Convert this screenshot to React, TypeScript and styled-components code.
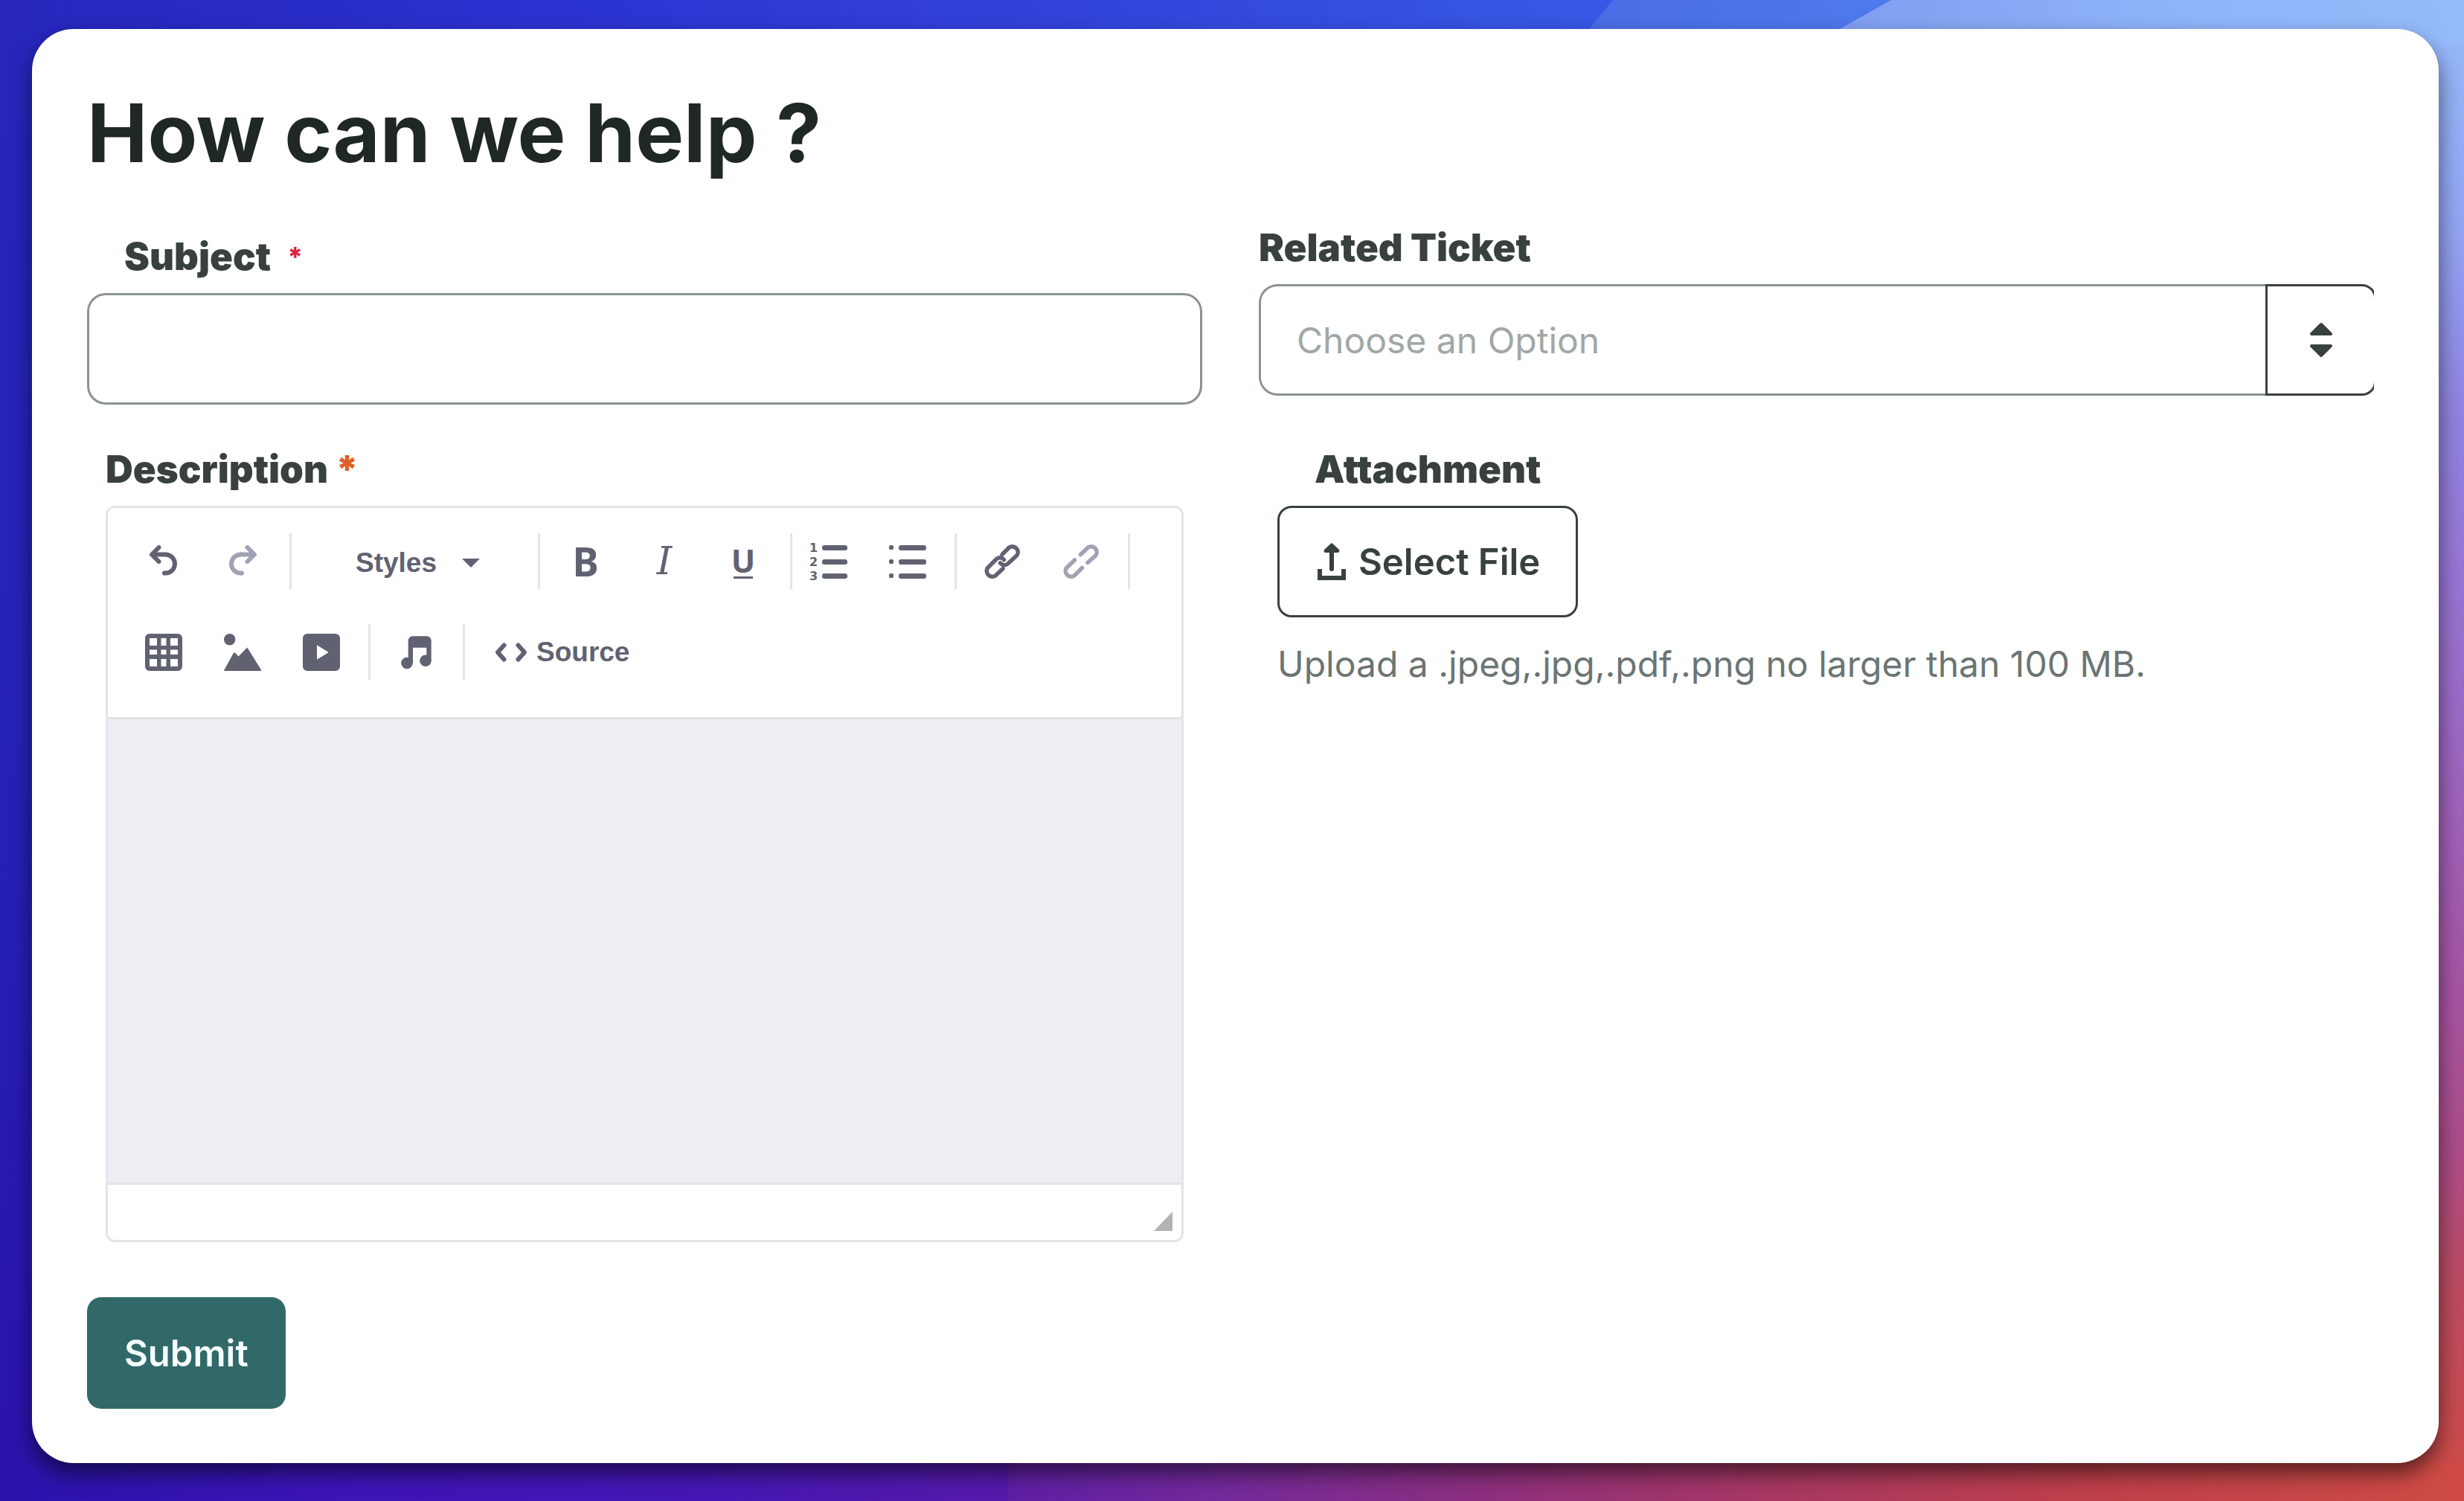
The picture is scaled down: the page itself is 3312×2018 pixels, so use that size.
import React from "react";
import styled, { createGlobalStyle, css } from "styled-components";

const ink = "#39413f";
const iconInk = "#616271";
const sans = `Inter, "Open Sans", sans-serif`;
const toolSans = `"Liberation Sans", Arial, sans-serif`;

const GlobalStyle = createGlobalStyle`
  *, *::before, *::after { box-sizing: border-box; }
  body { margin: 0; font-family: ${sans}; color: ${ink}; }
  button, input, select, textarea { font: inherit; color: inherit; margin: 0; }
`;

const Page = styled.div`
  position: relative;
  isolation: isolate;
  min-height: 100vh;
  padding: 39px 34px 51px 43px;
`;

const Backdrop = styled.svg`
  position: absolute;
  inset: 0;
  z-index: -1;
  width: 100%;
  height: 100%;
`;

const Card = styled.main`
  min-height: calc(100vh - 90px);
  padding: 69px 87px 70px 74px;
  background: #fff;
  border-radius: 56px;
  box-shadow: 0 14px 28px rgba(0, 0, 0, 0.55);
`;

const Title = styled.h1`
  margin: 0 0 48px;
  font-size: 109px;
  line-height: 140px;
  font-weight: 700;
  color: #1f2827;
`;

const Fields = styled.div`
  display: grid;
  grid-template-columns: minmax(0, 1fr) minmax(0, 1fr);
  gap: 50px 76px;
  align-items: start;
`;

const Field = styled.div<{ $lowered?: boolean; $inset?: boolean }>`
  display: flex;
  flex-direction: column;
  gap: 12px;
  padding: ${(p) => (p.$lowered ? "12px" : "0")} ${(p) => (p.$inset ? "25px" : "0")} 0;
`;

const Label = styled.label<{ $indent?: boolean }>`
  display: flex;
  padding-left: ${(p) => (p.$indent ? "50px" : "0")};
  font-size: 51px;
  line-height: 74px;
  font-weight: 900;
`;

const Required = styled.span<{ $tone: "light" | "strong" }>`
  ${(p) =>
    p.$tone === "light"
      ? css`
          margin-left: 22px;
          font-size: 36px;
          font-weight: 800;
          color: #d9253f;
        `
      : css`
          margin-left: 10px;
          color: #dd6127;
        `}
`;

const TextInput = styled.input`
  width: 100%;
  height: 150px;
  padding: 0 48px;
  border: 3px solid #8a9491;
  border-radius: 25px;
  background: #fff;
  font-size: 48px;
`;

const Combo = styled.div`
  display: flex;
  height: 150px;
  overflow: hidden;
`;

const Select = styled.select`
  flex: 1;
  min-width: 0;
  padding: 0 48px;
  appearance: none;
  border: 3px solid #8a9491;
  border-right: 0;
  border-radius: 25px 0 0 25px;
  background: #fff;
  font-size: 48px;
  color: #a1a7a5;
`;

const ComboButton = styled.button`
  display: flex;
  align-items: center;
  justify-content: center;
  width: 149px;
  margin-right: -3px;
  padding: 0;
  border: 3px solid ${ink};
  border-radius: 0 19px 19px 0;
  background: #fff;
`;

const Editor = styled.div`
  border: 3px solid #e4e4ea;
  border-radius: 12px;
  overflow: hidden;
`;

const Toolbar = styled.div`
  display: flex;
  flex-wrap: wrap;
  row-gap: 47px;
  padding: 34px 14px 50px;
  border-bottom: 3px solid #e4e4e6;
  color: ${iconInk};
  font-family: ${toolSans};
`;

const ToolGroup = styled.div<{ $tight?: boolean; $last?: boolean }>`
  display: flex;
  align-items: center;
  gap: 20px;
  height: 75px;
  padding: 0 20px 0 ${(p) => (p.$tight ? "6px" : "18px")};
  border-right: ${(p) => (p.$last ? "0" : "3px solid #e4e4ea")};
`;

const Tool = styled.button`
  display: flex;
  align-items: center;
  justify-content: center;
  width: 86px;
  height: 75px;
  padding: 0;
  border: 0;
  background: none;

  &:disabled {
    color: #a1a2b5;
  }
`;

const TextTool = styled(Tool)`
  width: auto;
  gap: 12px;
  padding: 0 22px;
  font-size: 37px;
  font-weight: 700;
`;

const StylesTool = styled(TextTool)`
  gap: 34px;
  padding: 4px 58px 0 68px;
`;

const Bold = styled.span`
  font-family: "Noto Sans", sans-serif;
  font-size: 53px;
  line-height: 75px;
  font-weight: 700;
`;

const Italic = styled.span`
  font-family: "DejaVu Serif", serif;
  font-size: 52px;
  line-height: 75px;
  font-style: italic;
`;

const Underline = styled.span`
  padding-bottom: 2px;
  background: linear-gradient(currentColor, currentColor) center bottom / 26px 3px no-repeat;
  font-family: "Noto Sans", sans-serif;
  font-size: 43px;
  line-height: 44px;
  font-weight: 700;
`;

const EditorArea = styled.textarea`
  display: block;
  width: 100%;
  height: 623px;
  padding: 32px;
  border: 0;
  background: #edeef3;
  resize: none;
  font-size: 48px;
`;

const EditorFooter = styled.div`
  display: flex;
  align-items: flex-end;
  justify-content: flex-end;
  height: 77px;
  padding: 12px;
  border-top: 3px solid #e4e4e6;
`;

const FileButton = styled.button`
  display: flex;
  align-items: center;
  align-self: flex-start;
  gap: 17px;
  height: 150px;
  padding: 0 48px 0 51px;
  border: 3px solid ${ink};
  border-radius: 19px;
  background: #fff;
  font-size: 49px;
  font-weight: 600;
`;

const Hint = styled.p`
  margin: 14px 0 0;
  font-size: 48px;
  line-height: 74px;
  color: #6b7573;
`;

const Submit = styled.button`
  height: 150px;
  margin-top: 74px;
  padding: 0 50px;
  border: 0;
  border-radius: 19px;
  background: #316969;
  color: #f6fdfc;
  font-size: 49px;
  font-weight: 600;
`;

function Icon({ children, width = 50 }: { children: React.ReactNode; width?: number }) {
  return (
    <svg
      width={width}
      height="50"
      viewBox={`0 0 ${width} 50`}
      fill="currentColor"
      overflow="visible"
      aria-hidden="true"
    >
      {children}
    </svg>
  );
}

const line = { fill: "none", stroke: "currentColor", strokeWidth: 6, strokeLinecap: "round", strokeLinejoin: "round" } as const;

const UndoShape = () => (
  <>
    <path d="M18.5 6 9 15.5 18.5 25M10 15.5H27.5" {...line} />
    <path d="M27 15.5h.5a12.5 12.5 0 0 1 0 25H25.5" {...line} strokeLinecap="butt" />
    <circle cx="26" cy="40.5" r="3" />
  </>
);

const UndoIcon = () => (
  <Icon>
    <UndoShape />
  </Icon>
);

const RedoIcon = () => (
  <Icon>
    <g transform="translate(50 0) scale(-1 1)">
      <UndoShape />
    </g>
  </Icon>
);

const NumberedIcon = () => (
  <Icon>
    {[6, 25, 44].map((y, i) => (
      <React.Fragment key={y}>
        <text x="-1" y={y + 6} fontFamily="DejaVu Sans" fontWeight="700" fontSize="16">
          {i + 1}
        </text>
        <rect x="16" y={y - 3} width="34" height="7" rx="3" />
      </React.Fragment>
    ))}
  </Icon>
);

const BulletIcon = () => (
  <Icon>
    {[6, 25, 44].map((y) => (
      <React.Fragment key={y}>
        <rect x="0" y={y - 3} width="6" height="6" rx="2" />
        <rect x="13" y={y - 3} width="37" height="7" rx="3" />
      </React.Fragment>
    ))}
  </Icon>
);

const LinkIcon = () => (
  <Icon>
    <path
      d="M25 15.5 34.5 6A7.6 7.6 0 0 1 45 16.5L32.5 28A7 7 0 0 1 22.5 27M27.5 22.5A7 7 0 0 0 17.5 21.5L5.5 33.5A7.6 7.6 0 0 0 16 44L26 34.5"
      {...line}
      strokeWidth={5.5}
    />
  </Icon>
);

const UnlinkIcon = () => (
  <Icon>
    <path
      d="M24.5 15.5 34.5 6A7.6 7.6 0 0 1 45 16.5L34 26.5M16.5 23 5.5 33.5A7.6 7.6 0 0 0 16 44L26.5 33.5"
      {...line}
      strokeWidth={5.5}
    />
  </Icon>
);

const TableIcon = () => (
  <Icon>
    <path
      fillRule="evenodd"
      d="M6 0H44a6 6 0 0 1 6 6V44a6 6 0 0 1-6 6H6a6 6 0 0 1-6-6V6a6 6 0 0 1 6-6Z
        M6 6V16H16V6ZM21.5 6V16H28.5V6ZM34 6V16H44V6Z
        M6 21.5V28H16V21.5ZM21.5 21.5V28H28.5V21.5ZM34 21.5V28H44V21.5Z
        M6 34V44H16V34ZM21.5 34V44H28.5V34ZM34 34V44H44V34Z"
    />
  </Icon>
);

const ImageIcon = () => (
  <Icon>
    <circle cx="7.7" cy="7.7" r="7.7" />
    <path d="M0 49.5 12.8 26q1.2-1.5 2.6 0l4.1 4.5 11.8-12L50 48.5V50H0Z" />
  </Icon>
);

const VideoIcon = () => (
  <Icon>
    <path
      fillRule="evenodd"
      d="M6 0H44a6 6 0 0 1 6 6V44a6 6 0 0 1-6 6H6a6 6 0 0 1-6-6V6a6 6 0 0 1 6-6ZM19 15.3V34.7L34.7 25Z"
    />
  </Icon>
);

const AudioIcon = () => (
  <Icon>
    <path d="M14.7 39.7V9.3a6 6 0 0 1 6-6H39.7a6 6 0 0 1 6 6V36.3H39.3V18.7H21V39.7Z" />
    <circle cx="13" cy="39.5" r="7.8" />
    <circle cx="38" cy="36.3" r="7.8" />
  </Icon>
);

const SourceIcon = () => (
  <Icon width={44}>
    <path d="M12.5 15.5 4 25l8.5 9.5M31.5 15.5 40 25l-8.5 9.5" {...line} />
  </Icon>
);

const UploadIcon = () => (
  <Icon width={38}>
    <path d="M0 35H6V44H32V35H38V50H0Z" />
    <path d="M19 5V35" {...line} />
    <path d="M11 10.5 19 3l8 7.5Z" stroke="currentColor" strokeWidth="5" strokeLinejoin="round" />
  </Icon>
);

const CaretIcon = () => (
  <svg width="24" height="12" viewBox="0 0 24 12" fill="currentColor" aria-hidden="true">
    <path d="M0 0H24L12 12Z" />
  </svg>
);

const SortIcon = () => (
  <svg width="32" height="48" viewBox="0 0 32 48" fill={ink} stroke={ink} strokeWidth="4" strokeLinejoin="round" aria-hidden="true">
    <path d="M3 16 16 3 29 16Z" />
    <path d="M3 32H29L16 45Z" />
  </svg>
);

const ResizeIcon = () => (
  <svg width="25" height="26" viewBox="0 0 25 26" fill="#b3b3b3" aria-hidden="true">
    <path d="M25 0V26H0Z" />
  </svg>
);

type Stops = [string, number][];

function Gradient({ id, stops, vertical }: { id: string; stops: Stops; vertical?: boolean }) {
  return (
    <linearGradient
      id={id}
      gradientUnits="userSpaceOnUse"
      x1="0"
      y1="0"
      x2={vertical ? 0 : 3312}
      y2={vertical ? 2018 : 0}
    >
      {stops.map(([color, at]) => (
        <stop key={at} offset={at} stopColor={color} />
      ))}
    </linearGradient>
  );
}

function Wallpaper() {
  return (
    <Backdrop viewBox="0 0 3312 2018" preserveAspectRatio="none" aria-hidden="true">
      <defs>
        <Gradient id="left" vertical stops={[["#2626bc", 0], ["#2522b8", 0.5], ["#2b13ab", 1]]} />
        <Gradient id="top" stops={[["#2626bc", 0], ["#2b32cf", 0.22], ["#3142d9", 0.42], ["#3758e4", 0.65]]} />
        <Gradient id="mid" stops={[["#4a6de6", 0.645], ["#4e7aec", 0.77]]} />
        <Gradient id="light" stops={[["#819ff0", 0.75], ["#8db2f8", 0.87], ["#95bbfb", 1]]} />
        <Gradient
          id="bottom"
          stops={[
            ["#2b13ab", 0], ["#3c14b8", 0.14], ["#4516b5", 0.28], ["#551aab", 0.409], ["#5f1fa5", 0.4095], ["#742a9a", 0.5],
            ["#92307a", 0.62], ["#a83862", 0.72], ["#be3f4b", 0.84], ["#cf4b44", 1],
          ]}
        />
        <Gradient
          id="right"
          vertical
          stops={[
            ["#95bbfb", 0], ["#92a5f3", 0.15], ["#9084e2", 0.27], ["#9a6dcb", 0.45],
            ["#a555a5", 0.65], ["#ad4c88", 0.77], ["#ba4a62", 0.85], ["#cf4b44", 1],
          ]}
        />
      </defs>
      <rect width="1656" height="2018" fill="url(#left)" />
      <rect x="1656" width="1656" height="2018" fill="url(#right)" />
      <rect y="1967" width="3312" height="51" fill="url(#bottom)" />
      <rect width="3312" height="60" fill="url(#top)" />
      <path d="M2168 0H3312V60H2119Z" fill="url(#mid)" />
      <path d="M2542 0H3312V60H2436Z" fill="url(#light)" />
    </Backdrop>
  );
}

export default function App() {
  return (
    <>
      <GlobalStyle />
      <Page>
        <Wallpaper />
        <Card>
          <form onSubmit={(e) => e.preventDefault()}>
            <Title>How can we help ?</Title>
            <Fields>
              <Field $lowered>
                <Label htmlFor="subject" $indent>
                  Subject<Required $tone="light">*</Required>
                </Label>
                <TextInput id="subject" type="text" />
              </Field>
              <Field>
                <Label htmlFor="ticket">Related Ticket</Label>
                <Combo>
                  <Select id="ticket" defaultValue="">
                    <option value="">Choose an Option</option>
                  </Select>
                  <ComboButton type="button" aria-label="Show options">
                    <SortIcon />
                  </ComboButton>
                </Combo>
              </Field>
              <Field $inset>
                <Label htmlFor="description">
                  Description<Required $tone="strong">*</Required>
                </Label>
                <Editor>
                  <Toolbar>
                    <ToolGroup>
                      <Tool type="button" aria-label="Undo"><UndoIcon /></Tool>
                      <Tool type="button" aria-label="Redo" disabled><RedoIcon /></Tool>
                    </ToolGroup>
                    <ToolGroup>
                      <StylesTool type="button">
                        Styles
                        <CaretIcon />
                      </StylesTool>
                    </ToolGroup>
                    <ToolGroup>
                      <Tool type="button" aria-label="Bold"><Bold>B</Bold></Tool>
                      <Tool type="button" aria-label="Italic"><Italic>I</Italic></Tool>
                      <Tool type="button" aria-label="Underline"><Underline>U</Underline></Tool>
                    </ToolGroup>
                    <ToolGroup $tight>
                      <Tool type="button" aria-label="Numbered list"><NumberedIcon /></Tool>
                      <Tool type="button" aria-label="Bulleted list"><BulletIcon /></Tool>
                    </ToolGroup>
                    <ToolGroup>
                      <Tool type="button" aria-label="Link"><LinkIcon /></Tool>
                      <Tool type="button" aria-label="Unlink" disabled><UnlinkIcon /></Tool>
                    </ToolGroup>
                    <ToolGroup>
                      <Tool type="button" aria-label="Table"><TableIcon /></Tool>
                      <Tool type="button" aria-label="Image"><ImageIcon /></Tool>
                      <Tool type="button" aria-label="Video"><VideoIcon /></Tool>
                    </ToolGroup>
                    <ToolGroup>
                      <Tool type="button" aria-label="Audio"><AudioIcon /></Tool>
                    </ToolGroup>
                    <ToolGroup $last>
                      <TextTool type="button">
                        <SourceIcon />
                        Source
                      </TextTool>
                    </ToolGroup>
                  </Toolbar>
                  <EditorArea id="description" />
                  <EditorFooter>
                    <ResizeIcon />
                  </EditorFooter>
                </Editor>
              </Field>
              <Field $inset>
                <Label as="span" id="attachment-label" $indent>Attachment</Label>
                <FileButton type="button" aria-describedby="attachment-label attachment-hint">
                  <UploadIcon />
                  Select File
                </FileButton>
                <Hint id="attachment-hint">Upload a .jpeg,.jpg,.pdf,.png no larger than 100 MB.</Hint>
              </Field>
            </Fields>
            <Submit type="submit">Submit</Submit>
          </form>
        </Card>
      </Page>
    </>
  );
}
